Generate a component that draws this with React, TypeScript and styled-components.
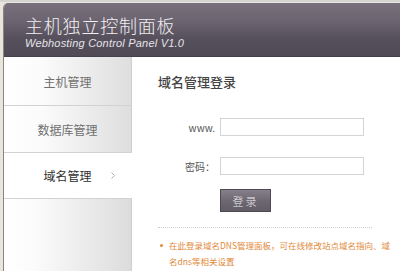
import styled, { createGlobalStyle } from "styled-components";

const GlobalStyle = createGlobalStyle`
  html, body {
    margin: 0;
    padding: 0;
    background: #e8e5de;
    overflow: hidden;
  }
  body {
    font-family: "Noto Sans CJK SC", "Noto Sans", sans-serif;
  }
`;

const Frame = styled.div`
  width: 400px;
  height: 271px;
  box-sizing: border-box;
  padding: 3px 0 0 3px;
  background: linear-gradient(to bottom, #d6d4d0 0, #d6d4d0 2px, #e8e5de 2px);
`;

const Panel = styled.div`
  height: 100%;
  display: flex;
  flex-direction: column;
  border-left: 1px solid #8c857c;
  border-top-left-radius: 5px;
  overflow: hidden;
  background: #fff;
`;

const Header = styled.div`
  height: 54px;
  flex: none;
  box-sizing: border-box;
  padding: 10px 0 0 21px;
  background: linear-gradient(to bottom, #78707a 0%, #6b6370 35%, #57505d 65%, #4f4a55 100%);
  border-bottom: 1px solid #45404b;
`;

const Title = styled.div`
  color: #f1eff2;
  font-size: 18px;
  font-weight: 300;
  line-height: 24px;
  letter-spacing: 0.8px;
`;

const Subtitle = styled.div`
  color: #e6e3e8;
  font-family: "Liberation Sans", Arial, sans-serif;
  font-style: italic;
  font-size: 11px;
  line-height: 12px;
  letter-spacing: 0.2px;
`;

const Body = styled.div`
  flex: 1;
  display: flex;
  min-height: 0;
`;

const Sidebar = styled.div`
  width: 128px;
  flex: none;
  display: flex;
  flex-direction: column;
`;

const NavItem = styled.div<{ $active?: boolean; $h: number }>`
  position: relative;
  height: ${(p) => p.$h}px;
  flex: none;
  display: flex;
  align-items: center;
  justify-content: center;
  font-size: 12px;
  color: ${(p) => (p.$active ? "#2e2e2e" : "#707070")};
  background: ${(p) =>
    p.$active
      ? "#fff"
      : "linear-gradient(to right, #ffffff 0%, #fbfbfb 30%, #dedede 100%)"};
  border-right: 1px solid ${(p) => (p.$active ? "#fff" : "#cfcfcf")};
  border-bottom: 1px solid ${(p) => (p.$active ? "#fff" : "#d2d2d2")};
  box-sizing: border-box;
`;

const Filler = styled.div`
  flex: 1;
  background: linear-gradient(to right, #ffffff 0%, #fbfbfb 25%, #dcdcdc 100%);
  border-right: 1px solid #cfcfcf;
  border-top: 1px solid #d2d2d2;
`;

const Chevron = styled.svg`
  position: absolute;
  right: 16px;
  top: 50%;
  margin-top: -3px;
`;

const Main = styled.div`
  flex: 1;
  box-sizing: border-box;
  padding: 16px 0 0 26px;
  display: flex;
  flex-direction: column;
`;

const Heading = styled.div`
  font-size: 13px;
  line-height: 18px;
  color: #444;
  font-weight: 500;
`;

const FormRow = styled.div<{ $mt: number }>`
  display: flex;
  align-items: center;
  gap: 5px;
  margin-top: ${(p) => p.$mt}px;
`;

const Label = styled.label`
  width: 57px;
  text-align: right;
  font-size: 10px;
  color: #555;
`;

const Input = styled.input`
  width: 144px;
  height: 18px;
  box-sizing: border-box;
  border: 1px solid #d4d4d4;
  background: #fff;
  margin: 0;
  padding: 0 4px;
  outline: none;
`;

const Button = styled.button`
  margin: 14px 0 0 62px;
  width: 51px;
  height: 23px;
  padding: 0;
  border: 1px solid #4e4952;
  background: linear-gradient(to bottom, #86808a 0%, #6e6873 50%, #615c66 100%);
  color: #eeecef;
  font-family: "Noto Sans CJK SC", sans-serif;
  font-size: 11px;
  font-weight: 300;
  letter-spacing: 2px;
`;

const Divider = styled.div`
  width: 214px;
  margin-top: 15px;
  border-top: 1px dotted #cfcfcf;
`;

const Note = styled.div`
  margin-top: 9px;
  width: 240px;
  display: flex;
  gap: 6px;
  color: #e2893a;
  font-size: 8.5px;
  line-height: 16px;
`;

const Bullet = styled.span`
  flex: none;
  width: 3px;
  height: 3px;
  border-radius: 50%;
  background: #e2893a;
  margin: 7px 0 0 2px;
`;

export default function App() {
  return (
    <>
      <GlobalStyle />
      <Frame>
        <Panel>
          <Header>
            <Title>主机独立控制面板</Title>
            <Subtitle>Webhosting Control Panel V1.0</Subtitle>
          </Header>
          <Body>
            <Sidebar>
              <NavItem $h={49}>主机管理</NavItem>
              <NavItem $h={47}>数据库管理</NavItem>
              <NavItem $h={45} $active>
                域名管理
                <Chevron width="4" height="7" viewBox="0 0 4 7">
                  <path d="M0.5 0.5 L3.5 3.5 L0.5 6.5" fill="none" stroke="#b0b0b0" strokeWidth="1" />
                </Chevron>
              </NavItem>
              <Filler />
            </Sidebar>
            <Main>
              <Heading>域名管理登录</Heading>
              <FormRow $mt={27}>
                <Label>www.</Label>
                <Input />
              </FormRow>
              <FormRow $mt={21}>
                <Label>密码：</Label>
                <Input type="password" />
              </FormRow>
              <Button>登录</Button>
              <Divider />
              <Note>
                <Bullet />
                <span>在此登录域名DNS管理面板，可在线修改站点域名指向、域名dns等相关设置</span>
              </Note>
            </Main>
          </Body>
        </Panel>
      </Frame>
    </>
  );
}
